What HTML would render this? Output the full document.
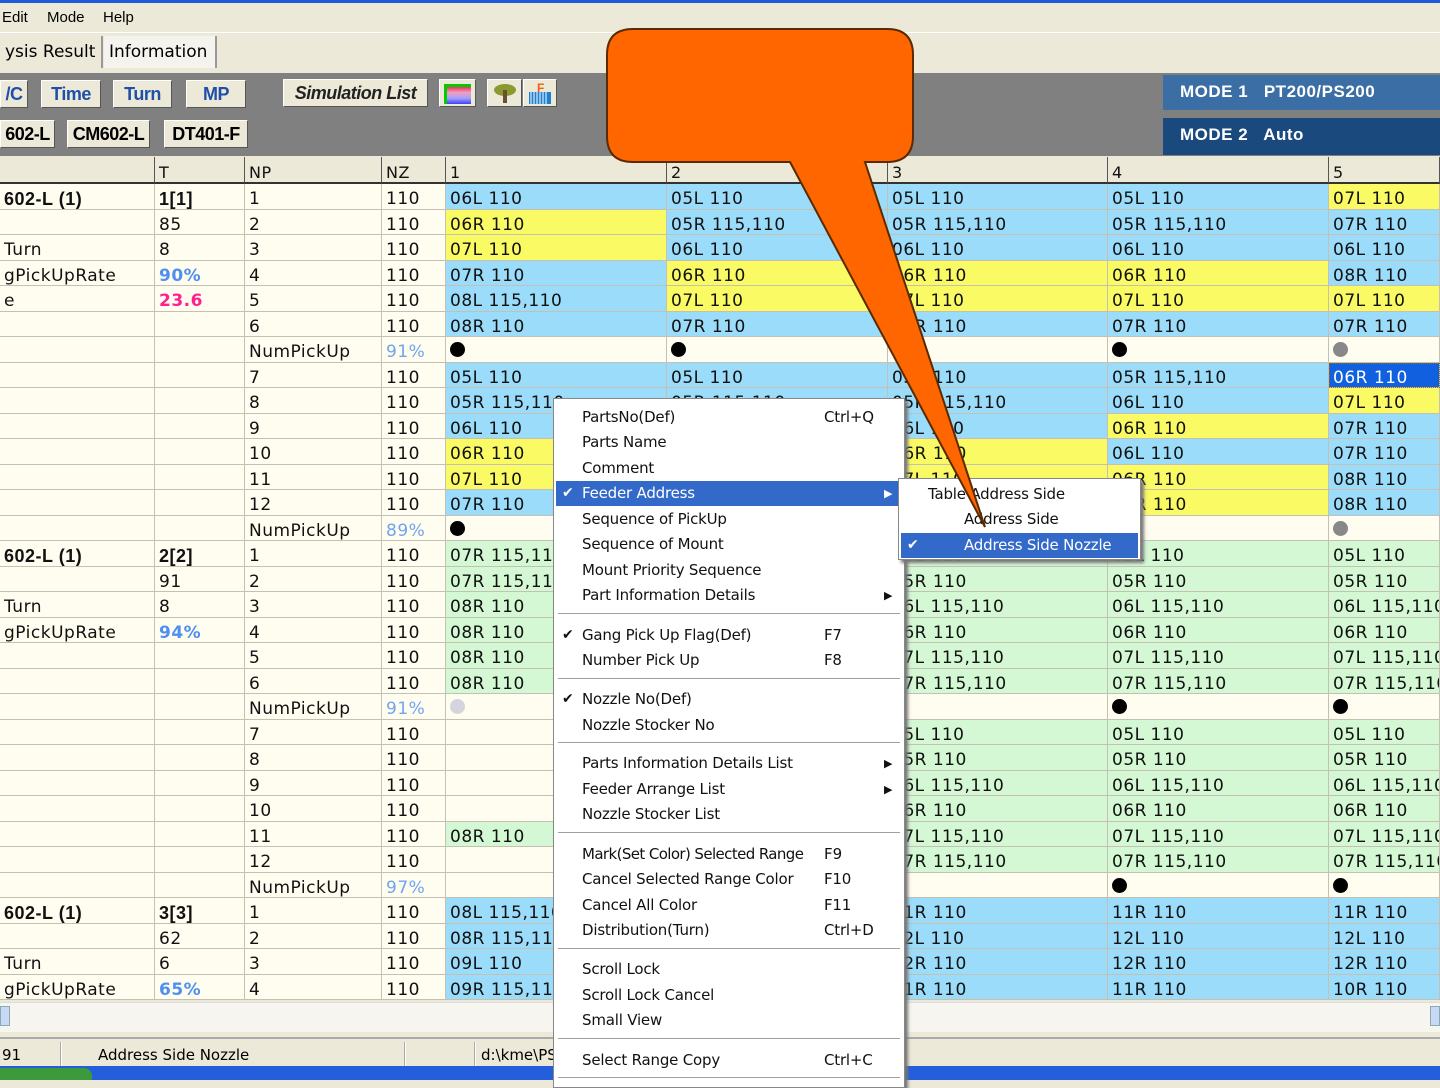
<!DOCTYPE html>
<html><head><meta charset="utf-8">
<style>
*{margin:0;padding:0;box-sizing:border-box}
body{width:1440px;height:1080px;overflow:hidden;background:#ece9d8;font-family:"DejaVu Sans","Liberation Sans",sans-serif;position:relative}
.abs{position:absolute}
.menubar{left:0;top:3px;width:1440px;height:29px;font-size:15px;font-family:"Liberation Sans",sans-serif}
.menubar span{position:absolute;top:6px}
.tab{position:absolute;top:36px;height:32px;font-size:17px;padding:6px 5px;border-right:2px solid #999;background:#f4f3ee;white-space:nowrap;overflow:hidden}
.band{left:0;top:73px;width:1440px;height:83px;background:#808080}
.btn{position:absolute;height:28px;background:#ece9d8;border:1px solid #fff;border-right-color:#555;border-bottom-color:#555;font:bold 18px "Liberation Sans",sans-serif;text-align:center;line-height:26px;white-space:nowrap;letter-spacing:-.5px}
.bl{color:#1f4fa8}
.mode{position:absolute;left:1163px;width:277px;color:#fff;font:bold 17px "Liberation Sans",sans-serif;padding-left:17px;line-height:34px;letter-spacing:.5px}
.grid{left:0;top:157px;display:grid;grid-template-columns:155px 90px 137px 64px 221px 221px 220px 221px 111px;grid-template-rows:27px repeat(32,25.5px);width:1440px}
.grid div{border-right:1px solid #c4c0b4;border-bottom:1px solid #c4c0b4;font-size:17px;line-height:18px;padding:6px 0 0 4px;white-space:nowrap;overflow:hidden;background:#fffcf0;color:#111;letter-spacing:.5px}
.grid div.h{background:#ece9d8;border-bottom:2px solid #333;border-right:1px solid #555;padding-top:7px;font-size:16px}
.grid div.b{background:#9bdcfa}.grid div.y{background:#fafa64}.grid div.g{background:#d4f8d4}
.grid div.s{background:#1060e0;color:#fff;outline:1px dotted #a07000;outline-offset:-1px}
.grid div.k{font-weight:bold;font-family:"Liberation Sans",sans-serif;font-size:18px}
.grid div.pb{color:#4f8ff0;font-weight:bold}.grid div.pk{color:#ff2090;font-weight:bold}.grid div.pl{color:#6fa5f0}
.d{display:inline-block;width:15px;height:15px;border-radius:50%;background:#000;margin-top:-3px}
.dg{background:#888}.dl{background:#d4d4dc}
.menu{left:553px;top:398px;width:352px;height:690px;background:#fff;border:1px solid #888;box-shadow:3px 3px 3px #777;font-size:15px;font-family:"DejaVu Sans",sans-serif}
.mi{position:absolute;left:2px;width:344px;height:25px;line-height:25px;padding-left:26px;color:#111;white-space:nowrap;letter-spacing:-.2px}
.mi .sc{position:absolute;left:268px}
.mi .ck{position:absolute;left:6px;font-size:14px}
.mi .ar{position:absolute;left:328px;font-size:11px}
.hl{background:#3369c8;color:#fff}
.sep{position:absolute;left:4px;width:342px;height:2px;border-top:1px solid #a0a0a0;border-bottom:1px solid #fff}
.sub{left:898px;top:478px;width:243px;height:82px;background:#fff;border:1px solid #888;box-shadow:3px 3px 3px #777;font-size:15px}
.status{left:0;top:1037px;width:1440px;height:30px;background:#ece9d8;border-top:2px solid #aaa;font-size:15px}
.status span{position:absolute;top:7px}
.task{left:0;top:1066px;width:1440px;height:14px;background:#245edb}
</style></head><body>
<div class="abs" style="left:0;top:0;width:1440px;height:3px;background:#1f5ad8"></div>
<div class="abs menubar"><span style="left:2px">Edit</span><span style="left:47px">Mode</span><span style="left:103px">Help</span></div>
<div class="abs" style="left:0;top:32px;width:1440px;height:40px;background:#ece9d8;border-top:1px solid #fff"></div>
<div class="tab" style="left:0;width:103px;background:#ece9d8">ysis Result</div>
<div class="tab" style="left:104px;width:113px">Information</div>
<div class="abs band"></div>
<div class="btn bl" style="left:0;top:80px;width:28px">/C</div>
<div class="btn bl" style="left:41px;top:80px;width:60px">Time</div>
<div class="btn bl" style="left:113px;top:80px;width:59px">Turn</div>
<div class="btn bl" style="left:186px;top:80px;width:60px">MP</div>
<div class="btn" style="left:283px;top:79px;width:145px;font-style:italic;font-size:18px;color:#222">Simulation List</div>
<div class="btn" style="left:439px;top:79px;width:37px;padding:4px">
<div style="width:27px;height:20px;border-left:3px solid #0c0;border-top:3px solid #0c0;background:linear-gradient(#f03060,#f0a0c0,#a0a0ff,#4040f0)"></div></div>
<div class="btn" style="left:487px;top:79px;width:35px"><svg width="30" height="26"><ellipse cx="15" cy="10" rx="11" ry="6" fill="#8a9a30"/><rect x="13" y="10" width="4" height="13" fill="#6a5030"/></svg></div>
<div class="btn" style="left:523px;top:79px;width:34px"><svg width="30" height="26"><rect x="4" y="12" width="22" height="12" fill="#2080d0"/><path d="M6 12v12M9 12v12M12 12v12M15 12v12M18 12v12M21 12v12" stroke="#fff" stroke-width="1"/><text x="12" y="12" font-size="12" font-weight="bold" fill="#f06010" font-family="Liberation Sans">F</text></svg></div>
<div class="btn" style="left:0;top:120px;width:55px">602-L</div>
<div class="btn" style="left:67px;top:120px;width:83px">CM602-L</div>
<div class="btn" style="left:164px;top:120px;width:84px">DT401-F</div>
<div class="mode" style="top:75px;height:35px;background:#3a6ea5">MODE 1&nbsp;&nbsp; PT200/PS200</div>
<div class="mode" style="top:118px;height:37px;background:#1a4a7d">MODE 2&nbsp;&nbsp; Auto</div>

<div class="abs grid">
<div class="h"></div><div class="h">T</div><div class="h">NP</div><div class="h">NZ</div><div class="h">1</div><div class="h">2</div><div class="h">3</div><div class="h">4</div><div class="h">5</div>
<div class="k">602-L (1)</div><div class="k">1[1]</div><div>1</div><div>110</div><div class="b">06L 110</div><div class="b">05L 110</div><div class="b">05L 110</div><div class="b">05L 110</div><div class="y">07L 110</div>
<div></div><div>85</div><div>2</div><div>110</div><div class="y">06R 110</div><div class="b">05R 115,110</div><div class="b">05R 115,110</div><div class="b">05R 115,110</div><div class="b">07R 110</div>
<div>Turn</div><div>8</div><div>3</div><div>110</div><div class="y">07L 110</div><div class="b">06L 110</div><div class="b">06L 110</div><div class="b">06L 110</div><div class="b">06L 110</div>
<div>gPickUpRate</div><div class="pb">90%</div><div>4</div><div>110</div><div class="b">07R 110</div><div class="y">06R 110</div><div class="y">06R 110</div><div class="y">06R 110</div><div class="b">08R 110</div>
<div>e</div><div class="pk">23.6</div><div>5</div><div>110</div><div class="b">08L 115,110</div><div class="y">07L 110</div><div class="y">07L 110</div><div class="y">07L 110</div><div class="y">07L 110</div>
<div></div><div></div><div>6</div><div>110</div><div class="b">08R 110</div><div class="b">07R 110</div><div class="b">07R 110</div><div class="b">07R 110</div><div class="b">07R 110</div>
<div></div><div></div><div>NumPickUp</div><div class="pl">91%</div><div><span class="d"></span></div><div><span class="d"></span></div><div></div><div><span class="d"></span></div><div><span class="d dg"></span></div>
<div></div><div></div><div>7</div><div>110</div><div class="b">05L 110</div><div class="b">05L 110</div><div class="b">05R 110</div><div class="b">05R 115,110</div><div class="s">06R 110</div>
<div></div><div></div><div>8</div><div>110</div><div class="b">05R 115,110</div><div class="b">05R 115,110</div><div class="b">05R 115,110</div><div class="b">06L 110</div><div class="y">07L 110</div>
<div></div><div></div><div>9</div><div>110</div><div class="b">06L 110</div><div class="b">06L 110</div><div class="b">06L 110</div><div class="y">06R 110</div><div class="b">07R 110</div>
<div></div><div></div><div>10</div><div>110</div><div class="y">06R 110</div><div class="y">06R 110</div><div class="y">06R 110</div><div class="b">06L 110</div><div class="b">07R 110</div>
<div></div><div></div><div>11</div><div>110</div><div class="y">07L 110</div><div class="y">07L 110</div><div class="y">07L 110</div><div class="y">06R 110</div><div class="b">08R 110</div>
<div></div><div></div><div>12</div><div>110</div><div class="b">07R 110</div><div class="b">07R 110</div><div class="y">07R 110</div><div class="y">07R 110</div><div class="b">08R 110</div>
<div></div><div></div><div>NumPickUp</div><div class="pl">89%</div><div><span class="d"></span></div><div></div><div></div><div></div><div><span class="d dg"></span></div>
<div class="k">602-L (1)</div><div class="k">2[2]</div><div>1</div><div>110</div><div class="g">07R 115,110</div><div class="g">07R 115,110</div><div class="g">05L 110</div><div class="g">05L 110</div><div class="g">05L 110</div>
<div></div><div>91</div><div>2</div><div>110</div><div class="g">07R 115,110</div><div class="g">07R 115,110</div><div class="g">05R 110</div><div class="g">05R 110</div><div class="g">05R 110</div>
<div>Turn</div><div>8</div><div>3</div><div>110</div><div class="g">08R 110</div><div class="g">08R 110</div><div class="g">06L 115,110</div><div class="g">06L 115,110</div><div class="g">06L 115,110</div>
<div>gPickUpRate</div><div class="pb">94%</div><div>4</div><div>110</div><div class="g">08R 110</div><div class="g">08R 110</div><div class="g">06R 110</div><div class="g">06R 110</div><div class="g">06R 110</div>
<div></div><div></div><div>5</div><div>110</div><div class="g">08R 110</div><div class="g">08R 110</div><div class="g">07L 115,110</div><div class="g">07L 115,110</div><div class="g">07L 115,110</div>
<div></div><div></div><div>6</div><div>110</div><div class="g">08R 110</div><div class="g">08R 110</div><div class="g">07R 115,110</div><div class="g">07R 115,110</div><div class="g">07R 115,110</div>
<div></div><div></div><div>NumPickUp</div><div class="pl">91%</div><div><span class="d dl"></span></div><div></div><div></div><div><span class="d"></span></div><div><span class="d"></span></div>
<div></div><div></div><div>7</div><div>110</div><div></div><div></div><div class="g">05L 110</div><div class="g">05L 110</div><div class="g">05L 110</div>
<div></div><div></div><div>8</div><div>110</div><div></div><div></div><div class="g">05R 110</div><div class="g">05R 110</div><div class="g">05R 110</div>
<div></div><div></div><div>9</div><div>110</div><div></div><div></div><div class="g">06L 115,110</div><div class="g">06L 115,110</div><div class="g">06L 115,110</div>
<div></div><div></div><div>10</div><div>110</div><div></div><div></div><div class="g">06R 110</div><div class="g">06R 110</div><div class="g">06R 110</div>
<div></div><div></div><div>11</div><div>110</div><div class="g">08R 110</div><div class="g">08R 110</div><div class="g">07L 115,110</div><div class="g">07L 115,110</div><div class="g">07L 115,110</div>
<div></div><div></div><div>12</div><div>110</div><div></div><div></div><div class="g">07R 115,110</div><div class="g">07R 115,110</div><div class="g">07R 115,110</div>
<div></div><div></div><div>NumPickUp</div><div class="pl">97%</div><div></div><div></div><div></div><div><span class="d"></span></div><div><span class="d"></span></div>
<div class="k">602-L (1)</div><div class="k">3[3]</div><div>1</div><div>110</div><div class="b">08L 115,110</div><div class="b">08L 115,110</div><div class="b">11R 110</div><div class="b">11R 110</div><div class="b">11R 110</div>
<div></div><div>62</div><div>2</div><div>110</div><div class="b">08R 115,110</div><div class="b">08R 115,110</div><div class="b">12L 110</div><div class="b">12L 110</div><div class="b">12L 110</div>
<div>Turn</div><div>6</div><div>3</div><div>110</div><div class="b">09L 110</div><div class="b">09L 110</div><div class="b">12R 110</div><div class="b">12R 110</div><div class="b">12R 110</div>
<div>gPickUpRate</div><div class="pb">65%</div><div>4</div><div>110</div><div class="b">09R 115,110</div><div class="b">09R 115,110</div><div class="b">11R 110</div><div class="b">11R 110</div><div class="b">10R 110</div>
</div>

<div class="abs" style="left:0;top:1002px;width:1440px;height:30px;background:#f6f5f0;border-top:1px solid #ddd"></div>
<div class="abs" style="left:0;top:1006px;width:10px;height:20px;background:#c8d8f8;border:1px solid #8aa"></div>
<div class="abs" style="left:1430px;top:1006px;width:10px;height:20px;background:#c8d8f8;border:1px solid #8aa"></div>
<div class="abs status">
<span style="left:2px">91</span>
<div class="abs" style="left:60px;top:3px;width:2px;height:24px;border-left:1px solid #aaa;border-right:1px solid #fff"></div>
<span style="left:98px">Address Side Nozzle</span>
<div class="abs" style="left:404px;top:3px;width:2px;height:24px;border-left:1px solid #aaa;border-right:1px solid #fff"></div>
<div class="abs" style="left:474px;top:3px;width:2px;height:24px;border-left:1px solid #aaa;border-right:1px solid #fff"></div>
<span style="left:481px">d:\kme\PS</span>
</div>
<div class="abs task"><div class="abs" style="left:0;top:2px;width:92px;height:12px;background:#3c9a3c;border-radius:0 8px 0 0"></div></div>

<div class="abs menu">
<div class="mi" style="top:6px">PartsNo(Def)<span class="sc">Ctrl+Q</span></div>
<div class="mi" style="top:31px">Parts Name</div>
<div class="mi" style="top:57px">Comment</div>
<div class="mi hl" style="top:82px"><span class="ck">✔</span>Feeder Address<span class="ar">▶</span></div>
<div class="mi" style="top:108px">Sequence of PickUp</div>
<div class="mi" style="top:133px">Sequence of Mount</div>
<div class="mi" style="top:159px">Mount Priority Sequence</div>
<div class="mi" style="top:184px">Part Information Details<span class="ar">▶</span></div>
<div class="sep" style="top:214px"></div>
<div class="mi" style="top:224px"><span class="ck">✔</span>Gang Pick Up Flag(Def)<span class="sc">F7</span></div>
<div class="mi" style="top:249px">Number Pick Up<span class="sc">F8</span></div>
<div class="sep" style="top:279px"></div>
<div class="mi" style="top:288px"><span class="ck">✔</span>Nozzle No(Def)</div>
<div class="mi" style="top:314px">Nozzle Stocker No</div>
<div class="sep" style="top:343px"></div>
<div class="mi" style="top:352px">Parts Information Details List<span class="ar">▶</span></div>
<div class="mi" style="top:378px">Feeder Arrange List<span class="ar">▶</span></div>
<div class="mi" style="top:403px">Nozzle Stocker List</div>
<div class="sep" style="top:433px"></div>
<div class="mi" style="top:443px;letter-spacing:-.6px">Mark(Set Color) Selected Range<span class="sc" style="letter-spacing:0">F9</span></div>
<div class="mi" style="top:468px">Cancel Selected Range Color<span class="sc">F10</span></div>
<div class="mi" style="top:494px">Cancel All Color<span class="sc">F11</span></div>
<div class="mi" style="top:519px">Distribution(Turn)<span class="sc">Ctrl+D</span></div>
<div class="sep" style="top:549px"></div>
<div class="mi" style="top:558px">Scroll Lock</div>
<div class="mi" style="top:584px">Scroll Lock Cancel</div>
<div class="mi" style="top:609px">Small View</div>
<div class="sep" style="top:639px"></div>
<div class="mi" style="top:649px">Select Range Copy<span class="sc">Ctrl+C</span></div>
<div class="sep" style="top:678px"></div>
</div>
<div class="abs sub">
<div class="mi" style="top:3px;width:237px;padding-left:27px">Table Address Side</div>
<div class="mi" style="top:28px;width:237px;padding-left:63px">Address Side</div>
<div class="mi hl" style="top:54px;width:237px;padding-left:63px"><span class="ck">✔</span>Address Side Nozzle</div>
</div>

<svg class="abs" style="left:0;top:0" width="1440" height="1080">
<path d="M633 29 H887 Q913 29 913 55 V136 Q913 162 887 162 H865 L985 527 L790 162 H633 Q607 162 607 136 V55 Q607 29 633 29 Z" fill="#ff6600" stroke="#5a2a00" stroke-width="2"/>
</svg>
</body></html>
